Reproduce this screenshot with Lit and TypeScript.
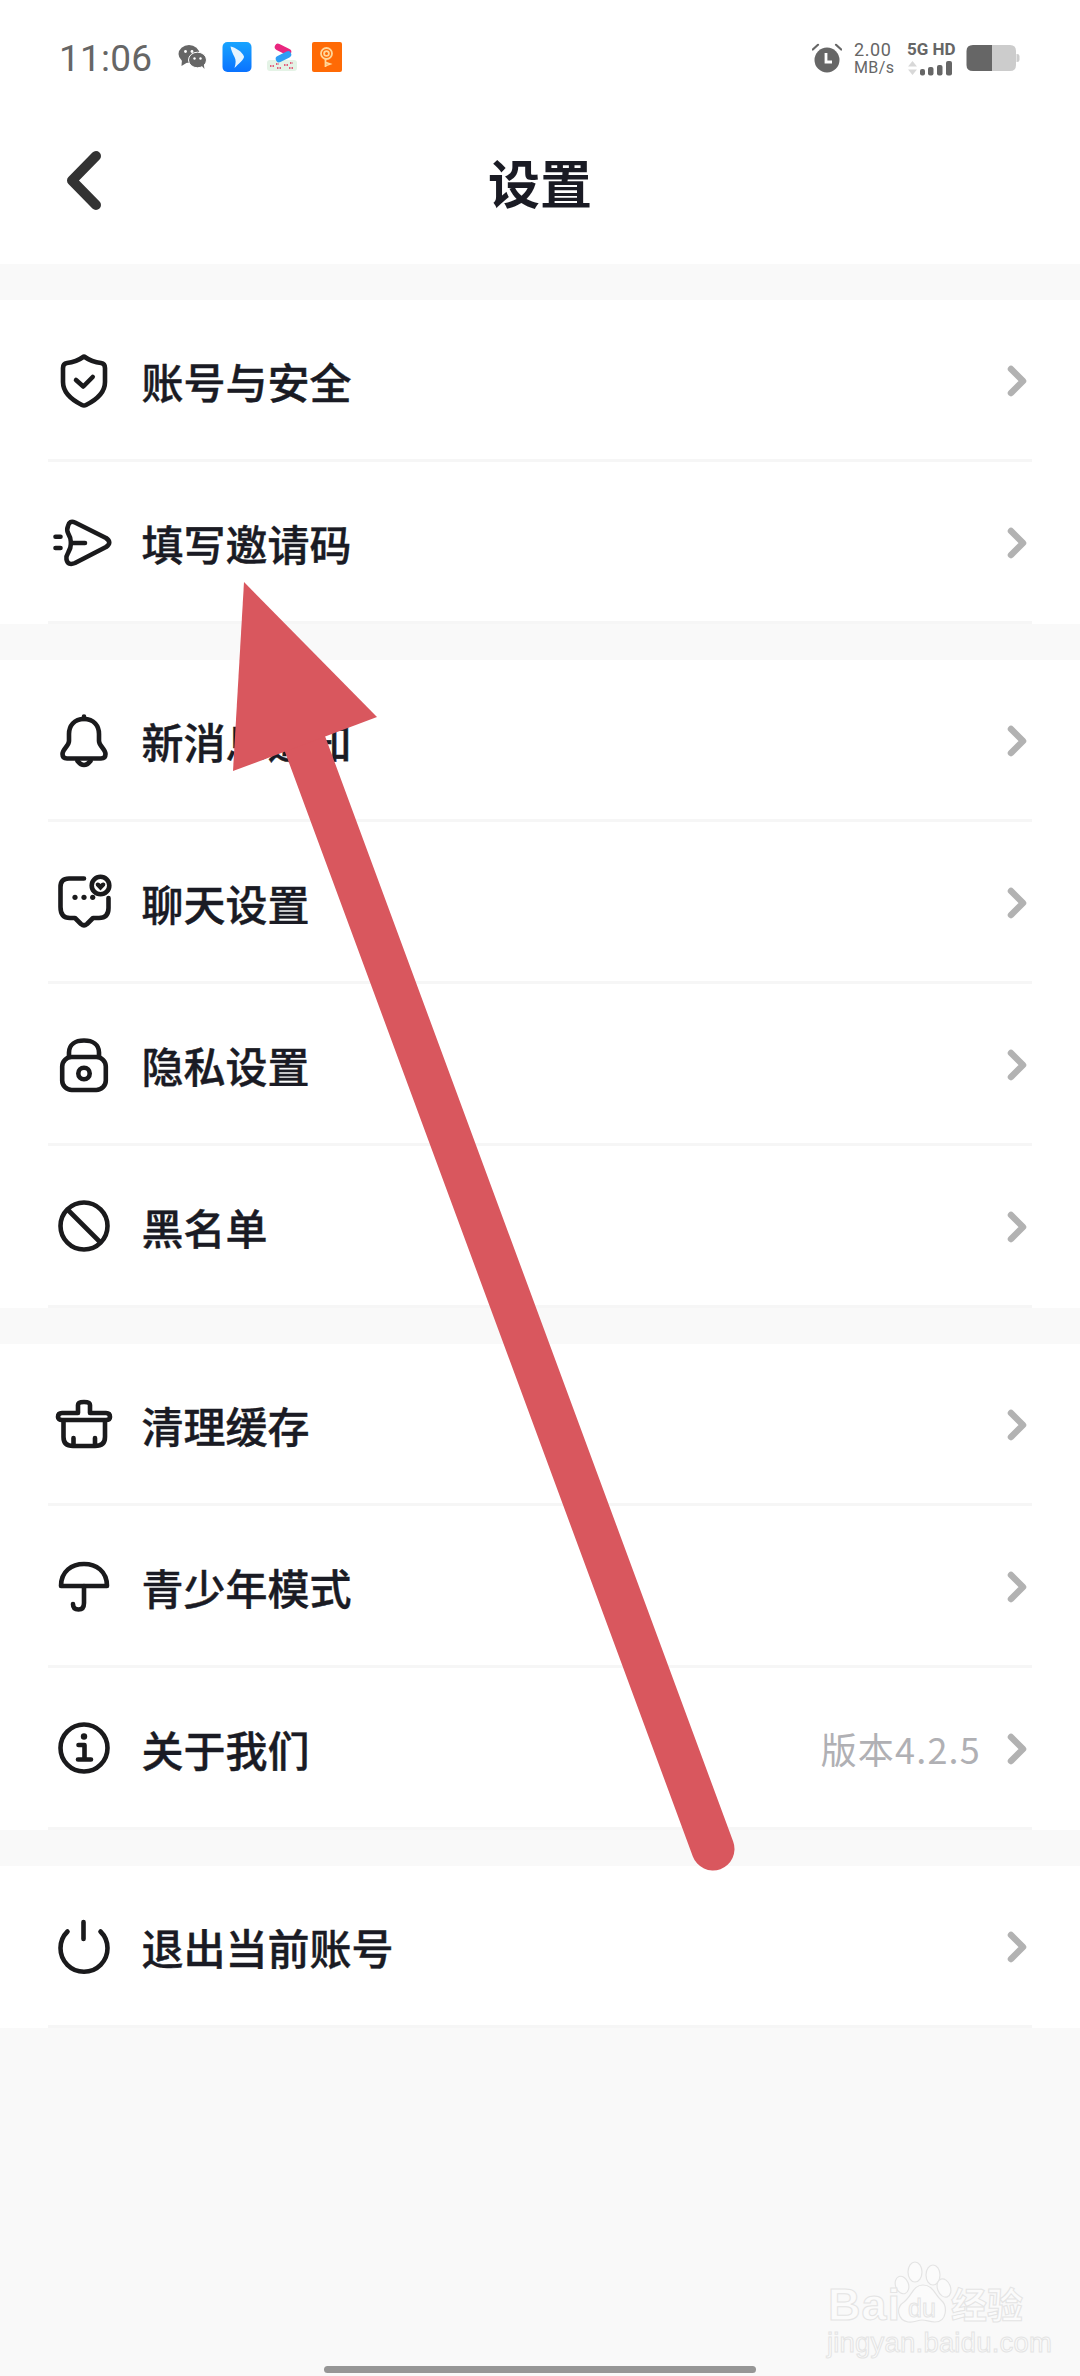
import { LitElement, html, css, svg } from "lit";
import { customElement } from "lit/decorators.js";

const I: Record<string, unknown> = {
  shield: svg`<path d="M30 6.5C35 10 42 12.5 47 13Q51 13.5 51 18V32C51 44 40 51 32 55Q30 56 28 55C20 51 9 44 9 32V18Q9 13.5 13 13C18 12.5 25 10 30 6.5Z"/><path d="M22 30L29.3 36.5L38.7 27"/>`,
  send: svg`<path d="M14 14Q15.5 8 21 10.5L52 26Q58.5 30.5 52 35L21 51Q14 54 12.5 47.5Q12 44 14 41Q17 36 17 31Q17 26 14 21Q12.5 18 14 14Z"/><path d="M17 31H31M1.5 24.7H6.5M1.5 36H6.5"/>`,
  bell: svg`<path d="M30 9C20 9 15 16 15 24V31C15 36 8.5 39 8.5 44C8.5 47 10 48.5 13 48.5H47C50 48.5 51.5 47 51.5 44C51.5 39 45 36 45 31V24C45 16 40 9 30 9Z"/><path d="M30 6.5V9M23.5 51Q30 59 36.5 51"/>`,
  chat: svg`<path d="M30 6.5H15Q6.5 6.5 6.5 15V35Q6.5 46 16 46H21L27 52Q30 54.5 33 52L39 46H45Q54.5 46 54.5 36V26"/><circle cx="46.5" cy="13.5" r="8.8"/><path class="f" d="M46.5 18.5L42 13.8Q41 11 43.5 10.5Q45.5 10.3 46.5 12Q47.5 10.3 49.5 10.5Q52 11 51 13.8Z"/><circle class="f" cx="21" cy="25.3" r="2.6"/><circle class="f" cx="30" cy="25.3" r="2.6"/><circle class="f" cx="38.7" cy="25.3" r="2.6"/>`,
  lock: svg`<rect x="8.2" y="23" width="43.6" height="33" rx="9.5"/><path d="M15 23V18.5C15 10.5 21.5 6.5 30 6.5C38.5 6.5 45 10.5 45 18.5V23"/><circle cx="30" cy="39.5" r="5.7"/>`,
  block: svg`<circle cx="30" cy="30" r="23.5"/><path d="M14 14L46 46"/>`,
  basket: svg`<path d="M24 19V11Q24 8 30 8Q36 8 36 11V19H52Q56 19 56 23Q56 26 52 26H8Q4 26 4 23Q4 19 8 19Z"/><path d="M9.5 27V43Q9.5 52 19 52H41Q51 52 51 43V27M19.5 44V52M41 44V52"/>`,
  umbrella: svg`<path d="M7 30C7 15 18 8 30 8C42 8 53 15 53 30Z"/><path d="M30 30V47Q30 53.5 24.5 53.5Q19 53.5 19 48"/>`,
  info: svg`<circle cx="30" cy="30" r="23.5"/><circle class="f" cx="30" cy="18.5" r="3.2"/><path d="M24.5 27H30.5V41.5M24 41.5H37"/>`,
  power: svg`<path d="M13.5 15.5A23.5 23.5 0 1 0 46.5 15.5M29.5 6V23"/>`,
};

type Row = { icon: string; label: string; value?: string };
const groups: Row[][] = [
  [{ icon: "shield", label: "账号与安全" }, { icon: "send", label: "填写邀请码" }],
  [
    { icon: "bell", label: "新消息通知" },
    { icon: "chat", label: "聊天设置" },
    { icon: "lock", label: "隐私设置" },
    { icon: "block", label: "黑名单" },
  ],
  [
    { icon: "basket", label: "清理缓存" },
    { icon: "umbrella", label: "青少年模式" },
    { icon: "info", label: "关于我们", value: "版本4.2.5" },
  ],
  [{ icon: "power", label: "退出当前账号" }],
];

@customElement("app-root")
export class AppRoot extends LitElement {
  static styles = css`
    :host {
      display: block;
      position: relative;
      width: 1080px;
      height: 2376px;
      overflow: hidden;
      background: #f9f9f9;
      font-family: "Noto Sans CJK SC", "Noto Sans", sans-serif;
      color: #1a1b24;
    }
    .head { background: #fff; height: 264px; display: flex; flex-direction: column; }
    .status {
      height: 116px;
      padding: 0 60px 0 59px;
      display: flex;
      align-items: center;
      color: #666;
      font-family: Roboto, sans-serif;
    }
    .time { font-size: 37px; width: 93px; letter-spacing: 0.2px; margin-right: 26px; line-height: 1; }
    .apps { display: flex; align-items: center; gap: 15px; flex: 1; margin-top: -2px; }
    .apps svg { display: block; }
    .sys { display: flex; align-items: center; }
    .speed { margin: 0 12px; width: 41px; display: flex; flex-direction: column; line-height: 1; font-size: 18px; letter-spacing: 0.6px; gap: 1px; }
    .speed span + span { font-size: 16px; letter-spacing: 0.4px; }
    .net { width: 50px; margin-right: 9px; display: flex; flex-direction: column; gap: 3px; }
    .net b { font-size: 17px; line-height: 16px; font-weight: 700; white-space: nowrap; }
    .nav {
      height: 130px;
      position: relative;
      display: flex;
      align-items: center;
      justify-content: center;
    }
    .back { position: absolute; left: 58px; top: 30px; }
    .title { font-size: 52px; font-weight: 700; line-height: 1; margin-top: 1px; }
    .group { background: #fff; margin-top: 36px; }
    .row { height: 159px; display: flex; align-items: center; padding: 0 51px 0 48px; }
    .ico { width: 72px; height: 72px; flex: none; margin-right: 21.5px; }
    .ico * { fill: none; stroke: #1a1a1c; stroke-width: 4.6; stroke-linecap: round; stroke-linejoin: round; }
    .ico .f { fill: #1a1a1c; stroke: none; }
    .label { flex: 1; font-size: 42px; font-weight: 500; line-height: 1; margin-top: 3px; -webkit-text-stroke: 0.4px #1a1b24; }
    .value { font-size: 36px; letter-spacing: 1.2px; color: #b0b0b4; line-height: 1; margin-right: 26px; margin-top: 1px; }
    .chev { display: block; flex: none; margin-top: 2px; }
    .div { height: 3px; margin: 0 48px; background: #f6f6f6; }
    .arrow { position: absolute; left: 0; top: 0; pointer-events: none; }
    .home { position: absolute; left: 324px; top: 2366px; width: 432px; height: 7px; border-radius: 4px; background: #969696; }
    .wm { position: absolute; left: 826px; top: 2258px; width: 200px; height: 100px; color: #fbfbfb; }
    .wm svg { position: absolute; left: 66px; top: 0; }
    .wm span { position: absolute; line-height: 1; white-space: nowrap; -webkit-text-stroke: 1px #e4e4e4; font-family: "Liberation Sans", sans-serif; }
    .bai { left: 2px; top: 24px; font-size: 45px; font-weight: 700; letter-spacing: 1px; }
    .du { left: 82px; top: 38px; font-size: 25px; }
    .jy { left: 125px; top: 27px; font-size: 36px; font-weight: 700; font-family: "Noto Sans CJK SC", sans-serif !important; }
    .url { left: 1px; top: 71px; font-size: 27.5px; letter-spacing: 0.2px; }
  `;

  private rowTpl(r: Row) {
    return html`<div class="row">
        <svg class="ico" viewBox="-6 -6 72 72">${I[r.icon]}</svg>
        <div class="label">${r.label}</div>
        ${r.value ? html`<div class="value">${r.value}</div>` : ""}
        <svg class="chev" width="22" height="32" viewBox="0 0 22 32"><path d="M4 4L16 16L4 28" fill="none" stroke="#b2b2b2" stroke-width="6.5" stroke-linecap="round" stroke-linejoin="round"/></svg>
      </div>
      <div class="div"></div>`;
  }

  render() {
    return html`
      <div class="head">
        <div class="status">
          <div class="time">11:06</div>
          <div class="apps">
            <svg width="29" height="26" viewBox="0 0 29 26" fill="#666">
              <ellipse cx="11" cy="10" rx="10.5" ry="9"/><path d="M4 15L3.5 22L10 18Z"/>
              <ellipse cx="19.5" cy="16" rx="9" ry="7.8" stroke="#fff" stroke-width="1"/><path d="M23 21L26.5 25L25.5 19Z"/>
              <circle cx="7.5" cy="7.5" r="1.4" fill="#fff"/><circle cx="14" cy="7.5" r="1.4" fill="#fff"/>
              <circle cx="16.5" cy="14.5" r="1.2" fill="#fff"/><circle cx="22.5" cy="14.5" r="1.2" fill="#fff"/>
            </svg>
            <svg width="30" height="30" viewBox="0 0 29 30">
              <defs><linearGradient id="bl" x1="0" y1="0" x2="0" y2="1"><stop offset="0" stop-color="#18a4ff"/><stop offset="1" stop-color="#0a72ff"/></linearGradient></defs>
              <rect width="29" height="30" rx="5" fill="url(#bl)"/>
              <path d="M8 4.5C13 5.5 20 10 21.5 14.5C22 17 16 22 12 26C13.5 21 13.5 18 12 15C10 11 8.5 8 8 4.5Z" fill="#e6f4ff"/>
            </svg>
            <svg width="30" height="30" viewBox="0 0 30 30">
              <rect x="0" y="18" width="30" height="11" rx="3" fill="#e4f3e6"/>
              <path d="M11 5L21 10" stroke="#e9267f" stroke-width="6.5" stroke-linecap="round"/>
              <path d="M21 12.5L12 17" stroke="#2f9ef5" stroke-width="6.5" stroke-linecap="round"/>
              <path d="M3 24h4M9 22h3M10 26h5M17 23h4M23 21h3M22 26h4" stroke="#e2607e" stroke-width="2" stroke-dasharray="1.5 1"/>
            </svg>
            <svg width="30" height="30" viewBox="0 0 30 30">
              <rect width="30" height="30" rx="2" fill="#ff6a05"/>
              <g fill="none" stroke="#ffd79a" stroke-width="1.8">
                <circle cx="14.5" cy="11.5" r="5.5"/><circle cx="14.5" cy="11.5" r="2.4"/>
                <path d="M13.5 17V25M14 20.5L18 22L14 23.5"/>
              </g>
            </svg>
          </div>
          <div class="sys">
            <svg width="30" height="30" viewBox="0 0 30 30" fill="#666">
              <circle cx="15" cy="17" r="12.5"/>
              <path d="M0.8 6.5L6 1.8M29.2 6.5L24 1.8" stroke="#666" stroke-width="2.2" stroke-linecap="round"/>
              <path d="M14 10V19H20" fill="none" stroke="#fff" stroke-width="2.8"/>
            </svg>
            <div class="speed"><span>2.00</span><span>MB/s</span></div>
            <div class="net">
              <b>5G HD</b>
              <svg width="50" height="16" viewBox="0 0 50 16">
                <path d="M1 6.5L5.5 1L10 6.5Z M1 9.5L5.5 15L10 9.5Z" fill="#d8d8d8"/>
                <rect x="13" y="9" width="5" height="6.5" rx="2" fill="#666"/>
                <rect x="21" y="7" width="5.5" height="8.5" rx="2" fill="#666"/>
                <rect x="30" y="5" width="5.5" height="10.5" rx="2" fill="#666"/>
                <rect x="39" y="1" width="6" height="14.5" rx="2" fill="#666"/>
              </svg>
            </div>
            <svg width="54" height="28" viewBox="0 0 54 28">
              <path d="M26 1H44Q50 1 50 7V21Q50 27 44 27H26Z" fill="#ccc"/>
              <path d="M26 1H7Q0.5 1 0.5 7V21Q0.5 27 7 27H26Z" fill="#666"/>
              <path d="M50.5 10H51Q53.5 10 53.5 12V16Q53.5 18 51 18H50.5Z" fill="#ccc"/>
            </svg>
          </div>
        </div>
        <div class="nav">
          <svg class="back" width="44" height="70" viewBox="0 0 44 70"><path d="M38 10L14 34.5L38 59" fill="none" stroke="#333" stroke-width="10" stroke-linecap="round" stroke-linejoin="round"/></svg>
          <div class="title">设置</div>
        </div>
      </div>
      ${groups.map((g) => html`<div class="group">${g.map((r) => this.rowTpl(r))}</div>`)}
      <div class="wm">
        <svg width="66" height="68" viewBox="0 0 66 68" fill="#fbfbfb" stroke="#e4e4e4" stroke-width="1.2">
          <ellipse cx="23" cy="14" rx="7" ry="10"/><ellipse cx="41" cy="17" rx="7" ry="10"/>
          <ellipse cx="10" cy="27" rx="6.5" ry="9" transform="rotate(-20 10 27)"/><ellipse cx="52" cy="30" rx="6.5" ry="9.5" transform="rotate(-20 52 30)"/>
          <path d="M31 27C41 27 43 37 49 42C56 48 55 64 43 64C37 64 35 62 30 62C25 62 23 65 16 64C6 62 3 50 12 44C20 38 21 27 31 27Z"/>
        </svg>
        <span class="bai">Bai</span>
        <span class="du">du</span>
        <span class="jy">经验</span>
        <span class="url">jingyan.baidu.com</span>
      </div>
      <svg class="arrow" width="1080" height="2376" viewBox="0 0 1080 2376">
        <path d="M305 744L713 1849" stroke="#d9575e" stroke-width="43" stroke-linecap="round" fill="none"/>
        <polygon points="244,582 377,717 233,771" fill="#d9575e"/>
      </svg>
      <div class="home"></div>
    `;
  }
}
